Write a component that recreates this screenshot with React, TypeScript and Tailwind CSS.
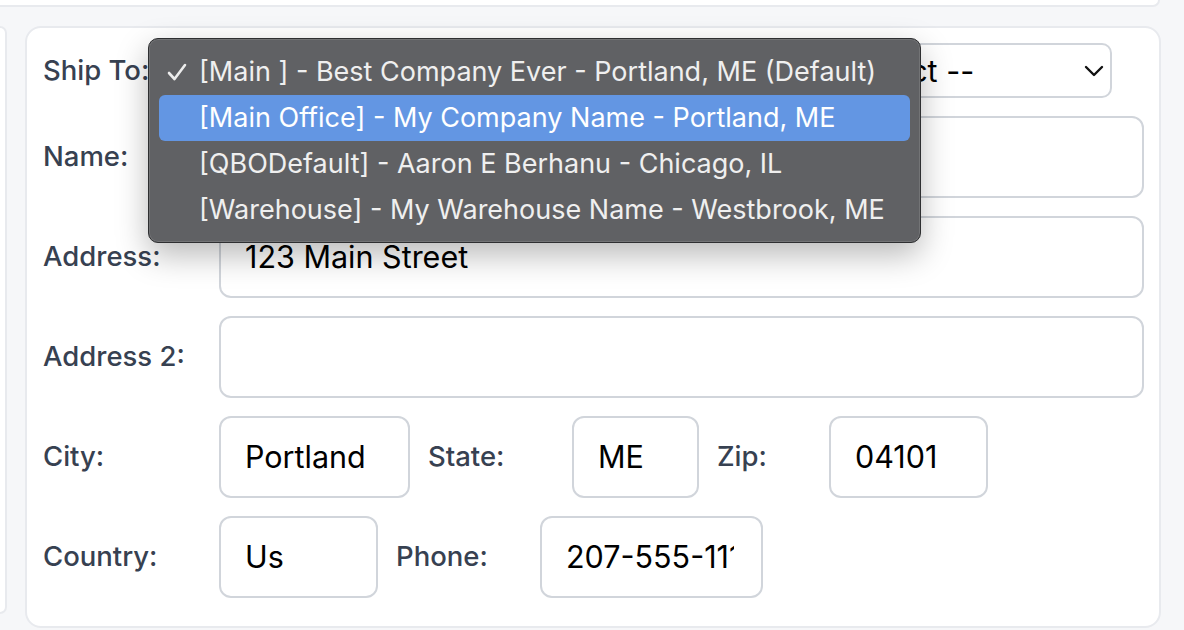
import React from 'react';

const MENU = [
  { text: '[Main ] - Best Company Ever - Portland, ME (Default)', checked: true, active: false },
  { text: '[Main Office] - My Company Name - Portland, ME', checked: false, active: true },
  { text: '[QBODefault] - Aaron E Berhanu - Chicago, IL', checked: false, active: false },
  { text: '[Warehouse] - My Warehouse Name - Westbrook, ME', checked: false, active: false },
];

const font = { fontFamily: 'Inter, "Noto Sans", sans-serif' };

function Label({ children, w }: { children: React.ReactNode; w: string }) {
  return <div className={`${w} shrink-0 text-[27.5px] font-medium text-[#374151]`}>{children}</div>;
}

function Field({ value, w }: { value?: string; w: string }) {
  return (
    <div className={`${w} h-[82px] shrink-0 rounded-xl border-2 border-[#d1d5db] bg-white pl-6 pr-[27px] flex items-center`}>
      <span className="block w-full overflow-hidden whitespace-nowrap text-[30.5px] text-black">{value}</span>
    </div>
  );
}

function Chevron() {
  return (
    <svg width="20" height="12" viewBox="0 0 20 12" fill="none" className="shrink-0">
      <path d="M2 2l8 8 8-8" stroke="#111" strokeWidth="2.4" strokeLinecap="round" strokeLinejoin="round" />
    </svg>
  );
}

function Check() {
  return (
    <svg width="20" height="18" viewBox="0 0 20 18" fill="none">
      <path d="M2 10l5.5 6L18 2" stroke="#ededed" strokeWidth="2.6" strokeLinecap="round" strokeLinejoin="round" />
    </svg>
  );
}

export default function App() {
  return (
    <div style={font} className="relative w-[1184px] h-[630px] overflow-hidden bg-[#f6f7f9]">
      {/* card above, scrolled off */}
      <div className="h-[7px] w-[1160px] bg-white border-b-2 border-r-2 border-[#e8eaee] rounded-br-2xl" />

      <div className="flex gap-[18px] mt-[19px]">
        <div className="w-[7px] h-[588px] bg-white border-r-2 border-y-2 border-[#e8eaee] rounded-r-2xl" />

        <div className="w-[1136px] h-[602px] bg-white border-2 border-[#e8eaee] rounded-2xl pl-[16px] pr-[14px] pt-[15px] flex flex-col gap-[18px]">
          {/* Ship To */}
          <div className="flex items-center gap-[18px] h-[55px]">
            <Label w="w-[158px]">Ship To:</Label>
            <div className="w-[548px] h-[55px] shrink-0 rounded-[10px] border-2 border-[#d1d5db] bg-white" />
            <div className="w-[327px] h-[55px] shrink-0 rounded-[10px] border-2 border-[#d1d5db] bg-white pl-6 pr-[6px] flex items-center justify-between text-[30.5px] text-black">
              <span>-- Select --</span>
              <Chevron />
            </div>
          </div>

          <div className="flex items-center gap-[18px]">
            <Label w="w-[158px]">Name:</Label>
            <Field w="w-[925px]" />
          </div>

          <div className="flex items-center gap-[18px]">
            <Label w="w-[158px]">Address:</Label>
            <Field w="w-[925px]" value="123 Main Street" />
          </div>

          <div className="flex items-center gap-[18px]">
            <Label w="w-[158px]">Address 2:</Label>
            <Field w="w-[925px]" />
          </div>

          <div className="flex items-center gap-[18px]">
            <Label w="w-[158px]">City:</Label>
            <Field w="w-[191px]" value="Portland" />
            <Label w="w-[126px]">State:</Label>
            <Field w="w-[127px]" value="ME" />
            <Label w="w-[94px]">Zip:</Label>
            <Field w="w-[159px]" value="04101" />
          </div>

          <div className="flex items-center gap-[18px]">
            <Label w="w-[158px]">Country:</Label>
            <Field w="w-[159px]" value="Us" />
            <Label w="w-[126px]">Phone:</Label>
            <Field w="w-[223px]" value="207-555-1111" />
          </div>
        </div>
      </div>

      {/* open native select menu */}
      <div className="absolute left-[148px] top-[38px] w-[773px] h-[205px] rounded-[10px] border border-[#2e2f31] bg-[#606164] py-[10px] px-[10px] shadow-[inset_0_0_0_1px_rgba(255,255,255,0.12),0_12px_32px_rgba(0,0,0,0.28)]">
        {MENU.map((m) => (
          <div
            key={m.text}
            className={`h-[46px] rounded-md flex items-center whitespace-nowrap text-[27px] ${m.active ? 'bg-[#6396e3] text-white' : 'text-[#efefef]'}`}
          >
            <span className="w-[40px] pl-[8px] shrink-0 flex items-center">{m.checked ? <Check /> : null}</span>
            <span>{m.text}</span>
          </div>
        ))}
      </div>
    </div>
  );
}
